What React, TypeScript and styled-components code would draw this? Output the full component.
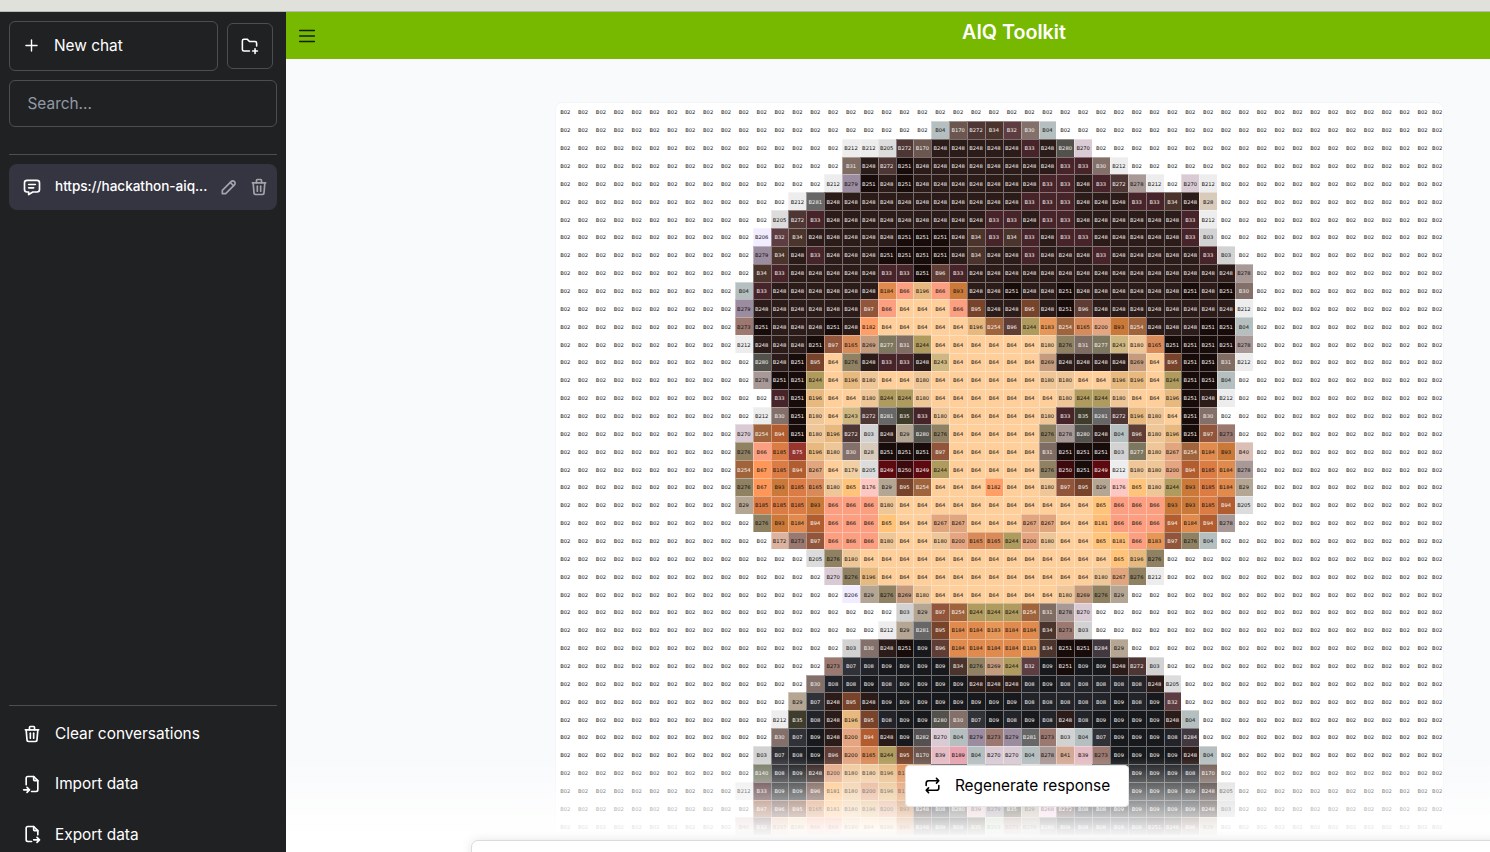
import React from "react";
import styled, { createGlobalStyle } from "styled-components";
import {
  TbPlus,
  TbFolderPlus,
  TbMessage,
  TbPencil,
  TbTrash,
  TbFileImport,
  TbFileExport,
  TbRepeat,
  TbMenu2,
} from "react-icons/tb";

const GlobalStyle = createGlobalStyle`
  * { box-sizing: border-box; }
  body { margin: 0; font-family: Inter, "Liberation Sans", sans-serif; overflow: hidden; }
  button, input { font: inherit; color: inherit; background: none; border: none; padding: 0; margin: 0; outline: none; }
`;

/* Brick colour number -> swatch colour */
const PALETTE: Record<string, string> = {
  "02": "#ffffff", "03": "#d2d2d2", "04": "#b5bfbf", "07": "#303238", "08": "#22242a", "09": "#17191c",
  "28": "#d9cbbb", "29": "#b5a694", "30": "#84706a", "31": "#7f6d64", "32": "#5e3d42", "33": "#472429",
  "34": "#4a342b", "35": "#3f3c2c", "39": "#e3bcc4", "40": "#dbbfb5", "41": "#d3a994", "64": "#fecf9b",
  "65": "#ffc47a", "66": "#fb9f80", "67": "#ff9759", "75": "#97352f", "93": "#cb7939", "94": "#b15d2f",
  "95": "#77432b", "96": "#5f3d34", "97": "#90553a", "140": "#737762", "165": "#d88a58", "170": "#6b574f",
  "172": "#dbb39f", "176": "#fdc8c1", "179": "#f0cfa4", "180": "#efc697", "181": "#ffbe78", "182": "#ff9f66",
  "183": "#e69656", "184": "#e08b4d", "185": "#db7c45", "189": "#e7a3af", "196": "#e7b97f", "200": "#e4a580",
  "203": "#b5c9ac", "205": "#dcdcdc", "206": "#f1ecff", "212": "#ededed", "243": "#ceb780", "244": "#b09b5e",
  "248": "#2b1c19", "249": "#5c0a10", "250": "#3c090d", "251": "#180c0b", "254": "#9f643b", "267": "#e2a67e",
  "268": "#f3c9e0", "269": "#c59b7e", "270": "#d9cad3", "272": "#4d3634", "273": "#9b7970", "276": "#8f8162",
  "277": "#7e775f", "278": "#a89896", "279": "#9c8c9f", "280": "#52514b", "281": "#666766", "282": "#555051",
  "284": "#423940",
};

const LIGHT_TEXT = new Set(
  "07 08 09 30 31 32 33 34 35 75 94 95 96 97 140 170 248 249 250 251 254 272 277 280 281 282 284".split(" ")
);

const COLUMNS = 50;

/* [first painted column, colour numbers from that column on]; the rest of a row is 02 */
const ROWS: [number, string][] = [
  [0, ""],
  [21, "04 170 272 34 32 30 04"],
  [16, "212 212 205 272 170 248 248 248 248 248 33 248 280 270"],
  [16, "31 248 272 251 248 248 248 248 248 248 248 248 33 33 30 212"],
  [15, "212 279 251 248 251 248 248 248 248 248 248 248 33 33 248 33 272 278 212 02 270 212"],
  [13, "212 281 248 248 248 248 248 248 248 248 248 248 248 33 33 33 248 248 248 33 33 34 248 28"],
  [12, "205 272 33 248 248 248 248 248 248 248 248 248 33 33 248 33 33 248 248 248 248 248 248 33 212"],
  [11, "206 32 34 248 248 248 248 248 251 251 251 248 34 33 34 33 248 33 33 248 248 248 248 248 33 03"],
  [11, "279 34 248 33 248 248 248 251 251 251 251 248 34 248 248 33 248 248 248 33 248 248 248 248 248 33 03"],
  [11, "34 33 248 248 248 248 248 33 33 251 96 33 248 248 248 248 248 248 248 248 248 248 248 248 248 248 248 278"],
  [10, "04 33 248 248 248 248 248 248 184 66 196 66 93 248 248 251 248 248 251 248 248 248 248 248 248 251 248 251 30"],
  [10, "279 248 248 248 248 248 248 97 66 64 64 64 66 95 248 248 95 248 251 96 248 248 248 248 248 248 248 248 212"],
  [10, "273 251 248 248 248 251 248 182 64 64 64 64 64 196 254 96 244 183 254 165 200 93 254 248 248 248 251 251 04"],
  [10, "212 248 248 248 251 97 165 269 277 31 244 64 64 64 64 64 64 180 276 31 277 243 180 165 251 251 251 251 278"],
  [10, "02 280 248 251 95 64 276 248 33 33 248 243 64 64 64 64 64 269 248 248 248 248 269 64 95 251 251 31 212"],
  [10, "02 278 251 251 244 64 196 180 64 64 180 64 64 64 64 64 64 180 180 64 64 196 196 64 244 251 251 04"],
  [12, "33 251 196 64 64 180 244 244 180 64 64 64 64 64 64 64 180 244 244 180 64 64 196 251 248 212"],
  [10, "02 212 30 251 180 64 243 272 281 35 33 180 64 64 64 64 64 180 33 35 281 272 196 180 64 251 30"],
  [10, "270 254 94 251 180 196 272 03 248 29 280 276 64 64 64 64 64 276 278 280 248 04 96 180 196 251 97 273"],
  [10, "276 66 185 75 196 180 30 28 251 251 251 97 64 64 64 64 64 31 251 251 251 03 277 180 267 254 184 93 40"],
  [10, "254 67 185 94 267 64 179 205 249 250 249 244 64 64 64 64 64 276 250 251 249 212 180 180 200 94 185 184 278"],
  [10, "276 67 93 185 165 180 65 176 29 95 254 64 64 64 182 64 64 180 97 95 29 176 65 180 244 93 185 184 29"],
  [10, "29 185 185 185 93 66 66 66 180 64 64 64 64 64 64 64 64 64 64 64 65 66 66 66 93 93 185 94 205"],
  [11, "276 93 184 94 66 66 66 65 64 64 267 267 64 64 64 267 267 64 64 181 66 66 66 94 184 94 278"],
  [12, "172 273 97 66 66 66 180 64 64 180 200 165 165 244 200 180 64 64 65 181 66 183 97 276 04"],
  [14, "205 276 180 64 64 64 64 64 64 64 64 64 64 64 64 64 64 65 196 276"],
  [15, "270 276 196 64 64 64 64 64 64 64 64 64 64 64 64 180 267 276 212"],
  [16, "206 29 276 269 180 64 64 64 64 64 64 64 180 269 276 29"],
  [19, "03 29 97 254 244 244 244 254 31 278 270"],
  [18, "212 29 281 95 184 184 183 184 184 34 273 03"],
  [16, "03 30 248 251 09 96 184 184 184 184 183 34 251 251 284 29"],
  [15, "273 07 08 09 09 09 09 34 276 269 244 32 09 251 09 09 248 272 03"],
  [14, "30 08 08 09 08 09 09 09 09 248 248 248 08 09 08 08 08 08 08 248 205"],
  [13, "29 07 248 95 248 09 09 09 09 09 09 09 09 08 08 08 08 08 09 08 09 32"],
  [12, "212 35 08 248 196 95 08 09 09 280 30 07 09 08 09 08 248 08 09 09 09 09 248 04"],
  [12, "30 07 09 248 200 94 248 09 282 270 04 279 273 279 281 273 03 04 07 09 09 09 08 284"],
  [11, "03 07 08 09 96 200 165 244 95 170 39 189 04 270 270 04 278 41 39 273 09 09 09 09 248 04"],
  [11, "140 08 09 248 200 180 180 196 184 93 248 09 04 279 278 270 04 39 41 09 09 09 09 09 08 170"],
  [10, "212 33 09 09 96 181 180 200 196 184 93 248 09 04 279 278 270 04 39 41 09 09 09 09 09 09 248 205"],
  [11, "97 96 95 165 181 180 196 200 93 248 08 280 39 279 35 29 268 272 08 08 09 09 09 09 09 248 03"],
  [10, "40 32 267 180 66 66 180 64 180 93 248 09 08 35 203 273 278 280 09 08 08 08 09 251 248 96 29"],
];

const MOSAIC = ROWS.map(([start, codes]) => {
  const painted = codes ? codes.split(" ") : [];
  return Array.from({ length: COLUMNS }, (_, i) => painted[i - start] ?? "02");
});

const Page = styled.div`
  width: 100vw;
  height: 852px;
  display: flex;
  flex-direction: column;
  overflow: hidden;
  background: #fff;
`;

const WindowStrip = styled.div`
  flex: none;
  height: 12px;
  background: #e1e1dc;
  border-bottom: 1px solid #b9bab6;
`;

const Body = styled.div`
  flex: 1;
  min-height: 0;
  display: flex;
`;

const Sidebar = styled.aside`
  flex: none;
  width: 286px;
  height: 840px;
  padding: 9px 9px 0;
  display: flex;
  flex-direction: column;
  background: #202123;
  color: #fff;
  font-size: 15.4px;
  overflow: hidden;
`;

const ActionRow = styled.div`
  display: flex;
  align-items: center;
  gap: 9px;
  padding-right: 4px;
`;

const NewChatButton = styled.button`
  flex: 1;
  height: 50px;
  display: flex;
  align-items: center;
  gap: 13px;
  padding: 0 0 1px 12px;
  border: 1px solid #4d4e50;
  border-radius: 6px;
`;

const FolderButton = styled.button`
  width: 46px;
  height: 46px;
  display: grid;
  place-items: center;
  padding: 0 1px 1px 0;
  border: 1px solid #4d4e50;
  border-radius: 6px;
`;

const SearchInput = styled.input`
  flex: none;
  height: 47px;
  margin-top: 9px;
  padding: 0 17.5px;
  border: 1px solid #4d4e50;
  border-radius: 6px;
  &::placeholder { color: #9199a6; opacity: 1; }
`;

const Divider = styled.hr`
  flex: none;
  width: 100%;
  height: 1px;
  margin: 0;
  border: 0;
  background: #4d4e50;
`;

const History = styled.nav`
  flex: 1;
  margin-top: 27px;
`;

const Conversation = styled.div`
  height: 46px;
  margin-top: 9px;
  padding: 0 8px 1px 13px;
  display: flex;
  align-items: center;
  border-radius: 8px;
  background: #343541;
`;

const ConversationTitle = styled.span`
  flex: 1;
  margin-left: 13px;
  padding-bottom: 1px;
  font-size: 13.6px;
  font-weight: 500;
  letter-spacing: -0.05px;
  white-space: nowrap;
`;

const IconAction = styled.button`
  display: flex;
  margin-left: 10px;
  color: #a3a3aa;
`;

const Settings = styled.div`
  flex: none;
  height: 147px;
`;

const SettingsItem = styled.button`
  width: 100%;
  height: 50.3px;
  display: flex;
  align-items: center;
  gap: 13px;
  padding: 5px 0 0 13px;
`;

const Main = styled.main`
  flex: 1;
  min-width: 0;
  display: flex;
  flex-direction: column;
  position: relative;
  overflow: hidden;
  background: #f9fafc;
`;

const Header = styled.header`
  flex: none;
  width: 1456px;
  height: 47px;
  padding-left: 10px;
  display: grid;
  grid-template-columns: 22px 1fr 32px;
  align-items: center;
  background: #76b900;
`;

const MenuIcon = styled(TbMenu2)`
  color: #10210a;
  stroke-width: 1.6;
`;

const Title = styled.h1`
  margin: 0 0 8px;
  color: #fff;
  text-align: center;
  font-size: 19.7px;
  font-weight: 600;
`;

const Thread = styled.section`
  flex: 1;
  min-height: 0;
  padding: 44px 0 0 270.3px;
  overflow: hidden;
`;

const Mosaic = styled.div`
  width: 887.2px;
  border-radius: 7px;
  overflow: hidden;
  background: #fff;
  box-shadow: 0 0 0 1px #f3f5f8;
`;

const MosaicRow = styled.div`
  display: grid;
  grid-template-columns: repeat(49, 17.87px) 11.6px;
  height: 17.87px;
`;

const Brick = styled.span<{ $code: string }>`
  display: flex;
  align-items: center;
  justify-content: center;
  overflow: hidden;
  padding-top: 0.9px;
  background: ${(p) => PALETTE[p.$code]};
  box-shadow: inset 1px 1px 0 rgba(255, 255, 255, 0.36);
  color: ${(p) => (LIGHT_TEXT.has(p.$code) ? "#f4f0ee" : "#111")};
  font: 5.2px "DejaVu Sans", sans-serif;
`;

const Footer = styled.div`
  position: absolute;
  left: 0;
  bottom: 0;
  width: 1456px;
  height: 95px;
  padding-left: 185px;
  overflow: hidden;
  background: linear-gradient(to bottom, rgba(255, 255, 255, 0), #fff 81px);
`;

const RegenerateButton = styled.button`
  width: 224px;
  height: 42px;
  margin: 8px 0 0 434px;
  display: flex;
  align-items: center;
  justify-content: center;
  gap: 13px;
  padding: 0 1px 1px 0;
  border: 1px solid #e6e6e8;
  border-radius: 4px;
  background: #fff;
  color: #000;
`;

const RegenerateLabel = styled.span`
  font-size: 15.4px;
`;

const Composer = styled.div`
  width: 1090px;
  height: 60px;
  margin-top: 33px;
  border: 1px solid #dcdcde;
  border-radius: 7px;
  background: #fff;
  box-shadow: 0 0 11px rgba(0, 0, 0, 0.1);
`;

export default function App() {
  return (
    <>
      <GlobalStyle />
      <Page>
        <WindowStrip />
        <Body>
          <Sidebar>
            <ActionRow>
              <NewChatButton>
                <TbPlus size={19} strokeWidth={1.8} />
                New chat
              </NewChatButton>
              <FolderButton>
                <TbFolderPlus size={19} />
              </FolderButton>
            </ActionRow>
            <SearchInput placeholder="Search..." />
            <History>
              <Divider />
              <Conversation>
                <TbMessage size={20} />
                <ConversationTitle>https://hackathon-aiq...</ConversationTitle>
                <IconAction>
                  <TbPencil size={20} />
                </IconAction>
                <IconAction>
                  <TbTrash size={20} />
                </IconAction>
              </Conversation>
            </History>
            <Settings>
              <Divider />
              <SettingsItem>
                <TbTrash size={20} />
                Clear conversations
              </SettingsItem>
              <SettingsItem>
                <TbFileImport size={20} />
                Import data
              </SettingsItem>
              <SettingsItem>
                <TbFileExport size={20} />
                Export data
              </SettingsItem>
            </Settings>
          </Sidebar>
          <Main>
            <Header>
              <MenuIcon size={22} />
              <Title>AIQ Toolkit</Title>
            </Header>
            <Thread>
              <Mosaic>
                {MOSAIC.map((row, y) => (
                  <MosaicRow key={y}>
                    {row.map((code, x) => (
                      <Brick key={x} $code={code}>
                        B{code}
                      </Brick>
                    ))}
                  </MosaicRow>
                ))}
              </Mosaic>
            </Thread>
            <Footer>
              <RegenerateButton>
                <TbRepeat size={19} />
                <RegenerateLabel>Regenerate response</RegenerateLabel>
              </RegenerateButton>
              <Composer />
            </Footer>
          </Main>
        </Body>
      </Page>
    </>
  );
}
